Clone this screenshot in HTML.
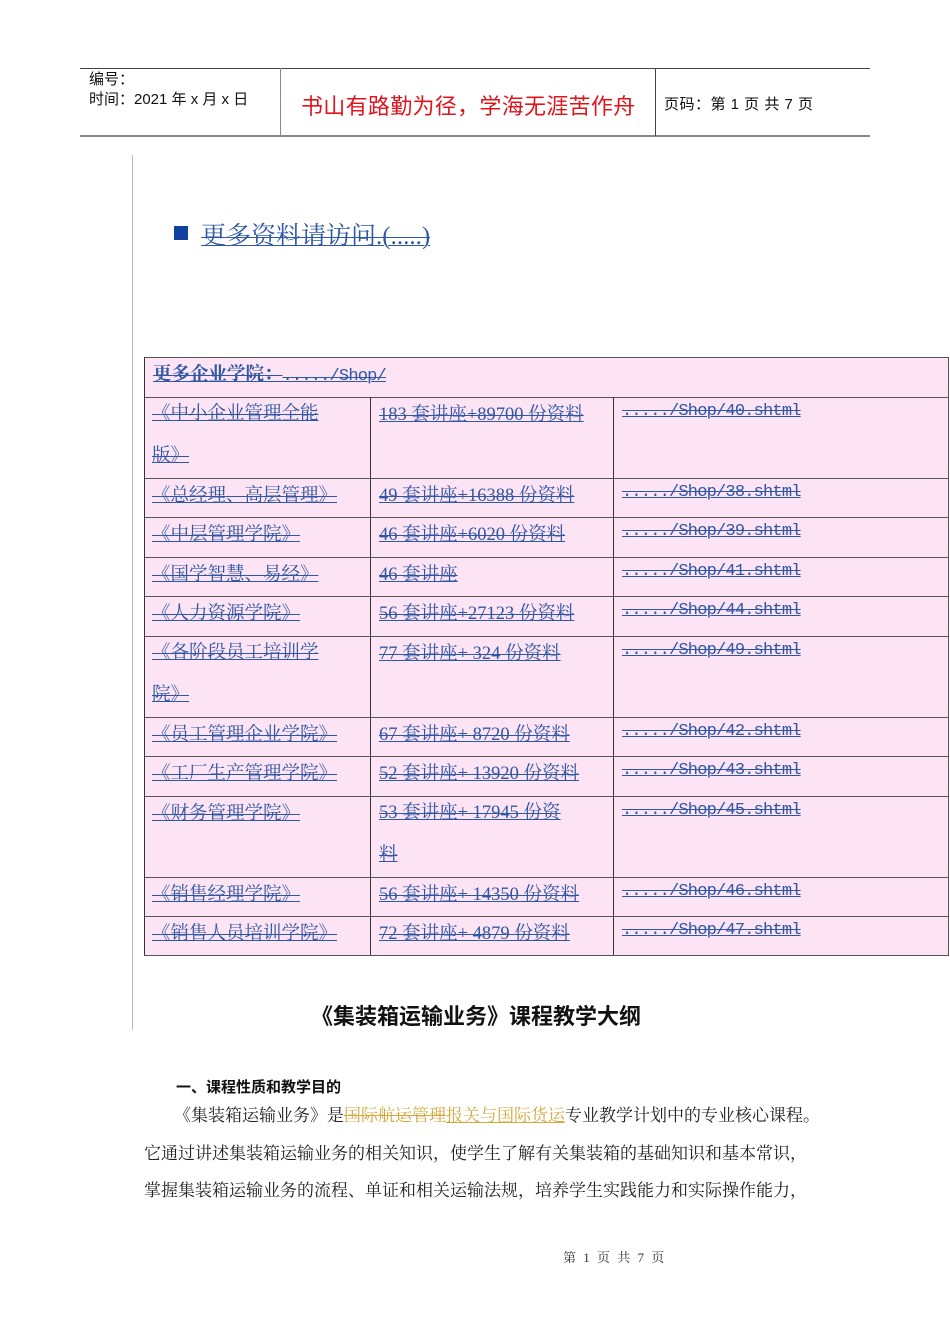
<!DOCTYPE html>
<html><head><meta charset="utf-8"><style>
body{margin:0;width:950px;height:1344px;background:#fff;position:relative;overflow:hidden;font-family:"Liberation Sans","Noto Sans CJK SC",sans-serif}
.a{position:absolute;white-space:nowrap}
.s{font-family:"Liberation Serif","Noto Serif CJK SC",serif}
.m{font-family:"Liberation Mono",monospace;font-size:17px!important;letter-spacing:-0.8px;font-weight:normal}
.lk{color:#2f57a4;text-decoration:underline line-through;text-decoration-thickness:1px;font-size:18.5px}
.row{position:absolute;left:144px;width:805px;background:#fce4f4;border-top:1px solid #555;box-sizing:border-box}
.c{position:absolute;top:2px}
.ml{line-height:42px;top:-5px}
.v{position:absolute;top:357px;height:598px;width:1px;background:#333}
</style></head><body>
<div class="a" style="left:80px;top:68px;width:790px;height:1px;background:#444"></div>
<div class="a" style="left:80px;top:135px;width:790px;height:2px;background:#888"></div>
<div class="a" style="left:280px;top:68px;width:1px;height:68px;background:#888"></div>
<div class="a" style="left:655px;top:68px;width:1px;height:68px;background:#444"></div>
<div class="a" style="left:89px;top:70px;font-size:15px;color:#111;line-height:20px">编号：<br>时间：2021 年 x 月 x 日</div>
<div class="a" style="left:301px;top:89px;font-size:22px;color:#e0141c;letter-spacing:0.3px">书山有路勤为径，学海无涯苦作舟</div>
<div class="a" style="left:664px;top:93px;font-size:15px;color:#111;letter-spacing:0.5px">页码：第 1 页  共 7 页</div>

<div class="a" style="left:132px;top:155px;width:1px;height:875px;background:#bbb"></div>

<div class="a" style="left:174px;top:226px;width:14px;height:14px;background:#1040a0"></div>
<div class="a s" style="left:201px;top:216px;font-size:25px;color:#2f57a4;text-decoration:underline line-through;text-decoration-thickness:1px">更多资料请访问.(.....)</div>

<div class="row" style="top:357px;height:40px;border-left:1px solid #555"><div class="c s lk" style="left:8px;font-weight:bold">更多企业学院：<span class="m">...../Shop/</span></div></div>
<div class="row" style="top:397px;height:81px"><div class="c s lk ml" style="left:8px">《中小企业管理全能<br>版》</div><div class="c s lk" style="left:235px">183 套讲座+89700 份资料</div><div class="c s lk m" style="left:478px;top:4px">...../Shop/40.shtml</div></div>
<div class="row" style="top:478px;height:39px"><div class="c s lk" style="left:8px">《总经理、高层管理》</div><div class="c s lk" style="left:235px">49 套讲座+16388 份资料</div><div class="c s lk m" style="left:478px;top:4px">...../Shop/38.shtml</div></div>
<div class="row" style="top:517px;height:40px"><div class="c s lk" style="left:8px">《中层管理学院》</div><div class="c s lk" style="left:235px">46 套讲座+6020 份资料 </div><div class="c s lk m" style="left:478px;top:4px">...../Shop/39.shtml</div></div>
<div class="row" style="top:557px;height:39px"><div class="c s lk" style="left:8px">《国学智慧、易经》</div><div class="c s lk" style="left:235px">46 套讲座</div><div class="c s lk m" style="left:478px;top:4px">...../Shop/41.shtml</div></div>
<div class="row" style="top:596px;height:40px"><div class="c s lk" style="left:8px">《人力资源学院》</div><div class="c s lk" style="left:235px">56 套讲座+27123 份资料</div><div class="c s lk m" style="left:478px;top:4px">...../Shop/44.shtml</div></div>
<div class="row" style="top:636px;height:81px"><div class="c s lk ml" style="left:8px">《各阶段员工培训学<br>院》</div><div class="c s lk" style="left:235px">77 套讲座+ 324 份资料</div><div class="c s lk m" style="left:478px;top:4px">...../Shop/49.shtml</div></div>
<div class="row" style="top:717px;height:39px"><div class="c s lk" style="left:8px">《员工管理企业学院》</div><div class="c s lk" style="left:235px">67 套讲座+ 8720 份资料</div><div class="c s lk m" style="left:478px;top:4px">...../Shop/42.shtml</div></div>
<div class="row" style="top:756px;height:40px"><div class="c s lk" style="left:8px">《工厂生产管理学院》</div><div class="c s lk" style="left:235px">52 套讲座+ 13920 份资料</div><div class="c s lk m" style="left:478px;top:4px">...../Shop/43.shtml</div></div>
<div class="row" style="top:796px;height:81px"><div class="c s lk" style="left:8px">《财务管理学院》</div><div class="c s lk ml" style="left:235px">53 套讲座+ 17945 份资<br>料 </div><div class="c s lk m" style="left:478px;top:4px">...../Shop/45.shtml</div></div>
<div class="row" style="top:877px;height:39px"><div class="c s lk" style="left:8px">《销售经理学院》</div><div class="c s lk" style="left:235px">56 套讲座+ 14350 份资料</div><div class="c s lk m" style="left:478px;top:4px">...../Shop/46.shtml</div></div>
<div class="row" style="top:916px;height:40px;border-bottom:1px solid #555"><div class="c s lk" style="left:8px">《销售人员培训学院》</div><div class="c s lk" style="left:235px">72 套讲座+ 4879 份资料</div><div class="c s lk m" style="left:478px;top:4px">...../Shop/47.shtml</div></div>
<div class="v" style="left:144px"></div>
<div class="v" style="left:370px;top:397px;height:558px"></div>
<div class="v" style="left:613px;top:397px;height:558px"></div>
<div class="v" style="left:948px;background:#555"></div>

<div class="a" style="left:311px;top:999px;font-size:22px;font-weight:bold;color:#111">《集装箱运输业务》课程教学大纲</div>
<div class="a" style="left:176px;top:1076px;font-size:15px;font-weight:bold;color:#111">一、课程性质和教学目的</div>
<div class="a s" style="left:174px;top:1101px;font-size:17px;color:#222">《集装箱运输业务》是<span style="color:#d6a840;text-decoration:line-through">国际航运管理</span><span style="color:#d6a840;text-decoration:underline">报关与国际货运</span>专业教学计划中的专业核心课程。</div>
<div class="a s" style="left:144px;top:1139px;font-size:17px;color:#222">它通过讲述集装箱运输业务的相关知识，使学生了解有关集装箱的基础知识和基本常识，</div>
<div class="a s" style="left:144px;top:1176px;font-size:17px;color:#222">掌握集装箱运输业务的流程、单证和相关运输法规，培养学生实践能力和实际操作能力，</div>
<div class="a s" style="left:563px;top:1247px;font-size:13px;color:#333;word-spacing:4px">第 1 页 共 7 页</div>
</body></html>
